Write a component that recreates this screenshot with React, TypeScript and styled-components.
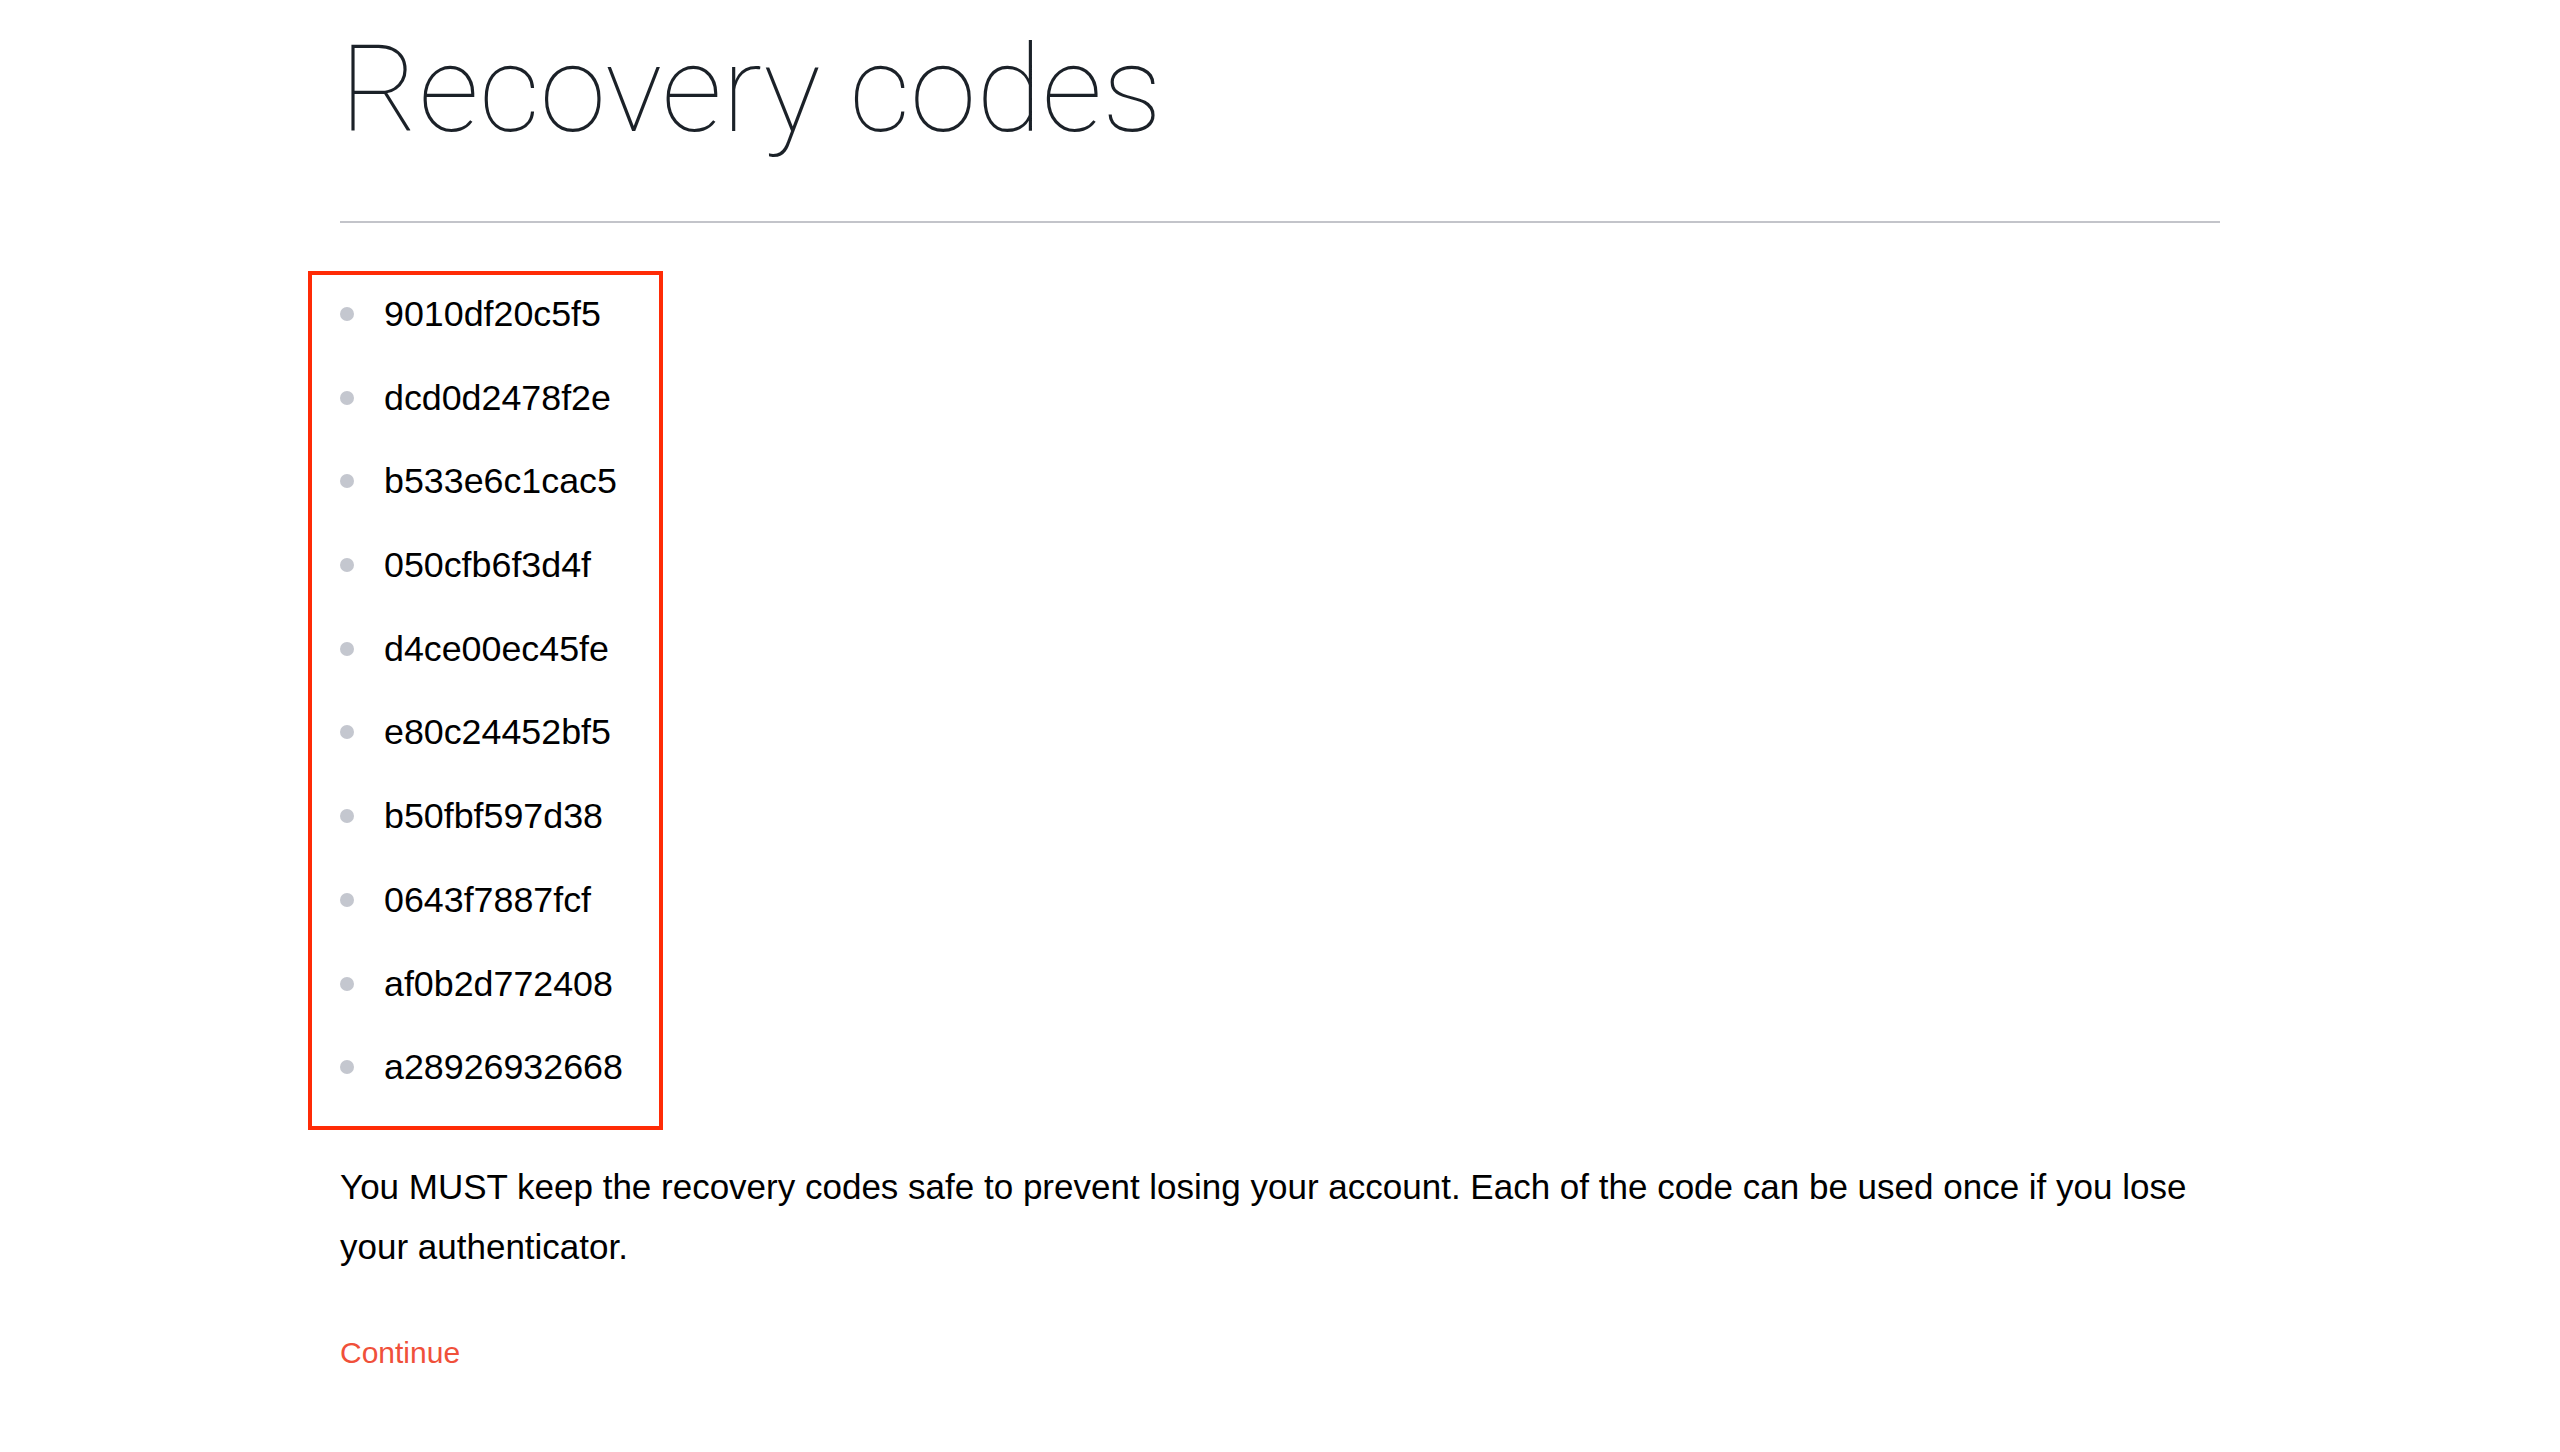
import React from "react";
import styled, { createGlobalStyle } from "styled-components";

const GlobalStyle = createGlobalStyle`
  html, body {
    margin: 0;
    padding: 0;
    background: #ffffff;
  }
  body {
    font-family: "Liberation Sans", Arial, sans-serif;
    color: #000000;
  }
`;

const Page = styled.main`
  width: 1880px;
  margin: 0 auto;
  display: flex;
  flex-direction: column;
  align-items: flex-start;
`;

const Header = styled.header`
  align-self: stretch;
  padding-top: 20px;
  padding-bottom: 61px;
  border-bottom: 2px solid #c3c4ca;
`;

const Title = styled.h1`
  margin: 0;
  font-family: "Roboto", "Liberation Sans", sans-serif;
  font-weight: 100;
  font-size: 120px;
  line-height: 140px;
  color: #1b2128;
`;

const CodesBox = styled.section`
  box-sizing: border-box;
  width: 355px;
  height: 859px;
  margin-top: 48px;
  margin-left: -32px;
  padding: 15px 0 0 28px;
  border: 4px solid #ff2b06;
`;

const CodeList = styled.ul`
  list-style: none;
  margin: 0;
  padding: 0;
  display: flex;
  flex-direction: column;
  gap: 35.7px;
`;

const CodeItem = styled.li`
  display: flex;
  align-items: center;
  gap: 30px;
  font-size: 35.8px;
  line-height: 48px;
  color: #000000;

  &::before {
    content: "";
    flex: none;
    width: 14px;
    height: 14px;
    border-radius: 50%;
    background: #c4c7cf;
  }
`;

const Notice = styled.p`
  margin: 27px 0 0;
  font-size: 35px;
  line-height: 60px;
  color: #000000;
`;

const ContinueLink = styled.a`
  margin-top: 56px;
  font-size: 30px;
  line-height: 40px;
  color: #f0503a;
  text-decoration: none;
  cursor: pointer;
`;

const codes = [
  "9010df20c5f5",
  "dcd0d2478f2e",
  "b533e6c1cac5",
  "050cfb6f3d4f",
  "d4ce00ec45fe",
  "e80c24452bf5",
  "b50fbf597d38",
  "0643f7887fcf",
  "af0b2d772408",
  "a28926932668",
];

export default function App() {
  return (
    <>
      <GlobalStyle />
      <Page>
        <Header>
          <Title>Recovery codes</Title>
        </Header>
        <CodesBox>
          <CodeList>
            {codes.map((c) => (
              <CodeItem key={c}>{c}</CodeItem>
            ))}
          </CodeList>
        </CodesBox>
        <Notice>
          You MUST keep the recovery codes safe to prevent losing your account. Each of the code can be
          used once if you lose your authenticator.
        </Notice>
        <ContinueLink href="#">Continue</ContinueLink>
      </Page>
    </>
  );
}
